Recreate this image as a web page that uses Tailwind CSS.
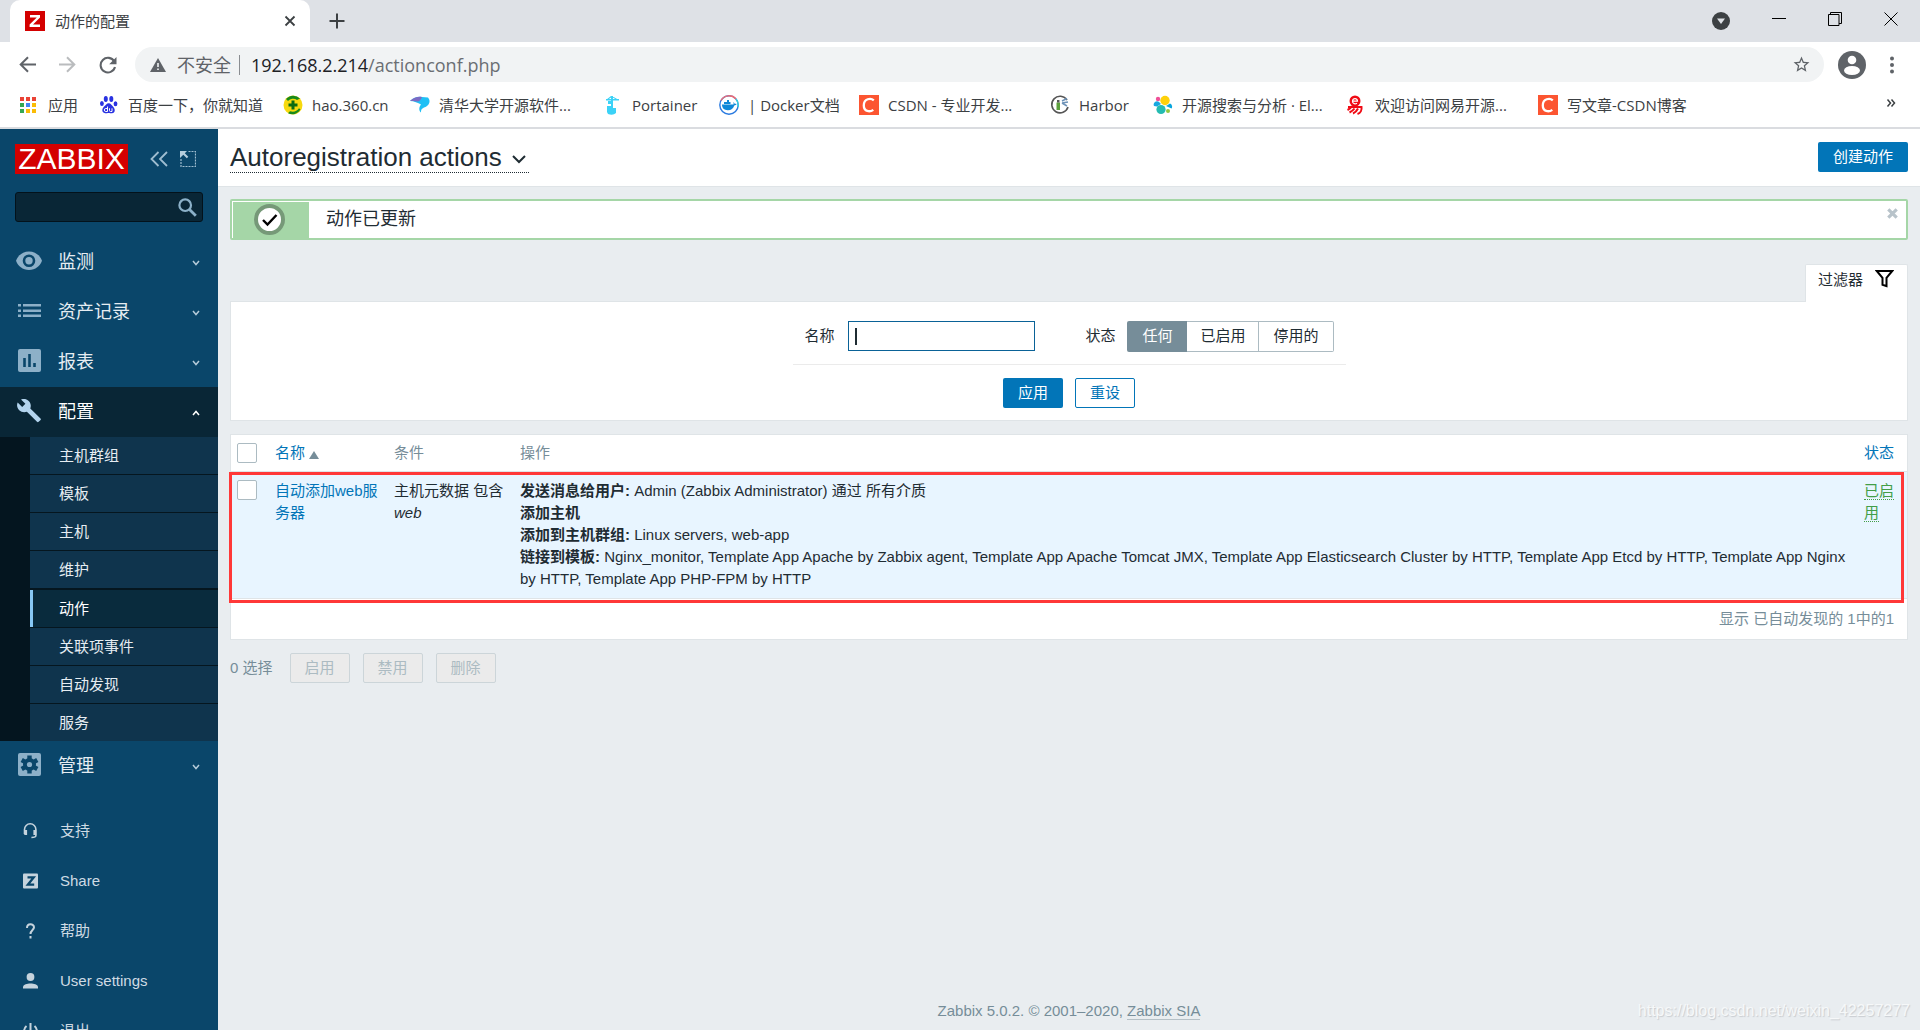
<!DOCTYPE html>
<html lang="zh-CN">
<head>
<meta charset="utf-8">
<title>动作的配置</title>
<script src="https://cdn.jsdelivr.net/npm/@tailwindcss/browser@4"></script>
</head>
<body class="flex h-screen flex-col overflow-hidden bg-[#e9edf0] font-['Liberation_Sans','Noto_Sans_CJK_SC',sans-serif] text-[15px] leading-[22px] text-[#1f2c33]">

<!-- Browser window -->
<header class="shrink-0 border-b-2 border-[#dadce0] bg-white font-['Open_Sans','Noto_Sans_CJK_SC',sans-serif] text-[#3c4043]">
  <div class="flex h-[42px] items-end bg-[#dee1e6] pl-[10px]">
    <div class="flex h-[42px] w-[300px] items-center rounded-t-[10px] bg-white pr-3 pl-[15px]">
      <svg class="size-5 shrink-0" viewBox="0 0 20 20"><rect width="20" height="20" fill="#d40000"/><path d="M5 4h10v2.4L8 13.6h7V16H4.600v-2.400L11.800 6.400H5z" fill="#fff"/></svg>
      <span class="ml-[10px] flex-1 text-[15px]">动作的配置</span>
      <button aria-label="关闭标签页" class="flex size-4 items-center justify-center"><svg class="size-3" viewBox="0 0 12 12" stroke="#3c4043" stroke-width="1.800"><path d="M1.500 1.500l9 9M10.500 1.500l-9 9"/></svg></button>
    </div>
    <button aria-label="新标签页" class="mb-[13px] ml-[19px]"><svg class="size-4" viewBox="0 0 16 16" stroke="#3c4043" stroke-width="2"><path d="M8 .5v15M.5 8h15"/></svg></button>
    <div class="ml-auto flex h-full items-center gap-[42px] pr-[22px]">
      <svg class="size-[18px]" viewBox="0 0 18 18"><circle cx="9" cy="9" r="9" fill="#3c4043"/><path d="M5 6.500h8L9 12z" fill="#dee1e6"/></svg>
      <svg class="-mt-[7px] size-[14px]" viewBox="0 0 14 14" stroke="#000"><path d="M0 7.500h14"/></svg>
      <svg class="-mt-[5px] size-[14px]" viewBox="0 0 14 14" fill="none" stroke="#000"><path d="M.5 2.500h10.500v11H.5zM2.500 2.500v-2h11v11h-2.500"/></svg>
      <svg class="-mt-[5px] size-[14px]" viewBox="0 0 14 14" stroke="#000"><path d="M.5.5l13 13M13.500.5l-13 13"/></svg>
    </div>
  </div>
  <div class="flex h-[45px] items-center pr-6 pl-[19px]">
    <button aria-label="后退"><svg class="size-[17px]" viewBox="0 0 17 17" fill="none" stroke="#5f6368" stroke-width="2"><path d="M17 8.500H2M9 1.200L1.700 8.500 9 15.800"/></svg></button>
    <button aria-label="前进" class="ml-[23px]"><svg class="size-[17px]" viewBox="0 0 17 17" fill="none" stroke="#babcbe" stroke-width="2"><path d="M0 8.500h15M8 1.200l7.300 7.300L8 15.800"/></svg></button>
    <button aria-label="重新加载" class="ml-[23px]"><svg class="size-[18px]" viewBox="0 0 18 18"><path d="M15.300 5.500A7.300 7.300 0 1 0 16 11" fill="none" stroke="#5f6368" stroke-width="2.100"/><path d="M17.500 1v7.300h-7.300z" fill="#5f6368"/></svg></button>
    <div class="ml-[18px] flex h-[35px] flex-1 items-center rounded-full bg-[#f1f3f4] pr-[13px] pl-[15px]">
      <svg class="size-4 shrink-0" viewBox="0 0 16 16"><path d="M8 1l8 14H0z" fill="#5f6368"/><path d="M8 6v4M8 11.500v1.500" stroke="#f1f3f4" stroke-width="1.600"/></svg>
      <span class="ml-[11px] text-[18px]/[24px] text-[#5f6368]">不安全</span>
      <span class="mx-2 h-5 w-px bg-[#8a8d91]"></span>
      <div class="ml-[3px] flex-1 text-[18px]/[24px] text-[#6a6e73]"><span class="text-[#202124]">192.168.2.214</span>/actionconf.php</div>
      <svg class="size-[19px]" viewBox="0 0 24 24" fill="#5f6368"><path d="M22 9.240l-7.190-.62L12 2 9.190 8.630 2 9.240l5.460 4.730L5.820 21 12 17.270 18.180 21l-1.630-7.030L22 9.240zM12 15.400l-3.760 2.270 1-4.280-3.320-2.880 4.380-.38L12 6.100l1.710 4.040 4.380.38-3.320 2.880 1 4.280L12 15.400z"/></svg>
    </div>
    <svg class="ml-[14px] size-7" viewBox="0 0 28 28"><circle cx="14" cy="14" r="14" fill="#5f6368"/><circle cx="14" cy="9" r="4.300" fill="#fff"/><ellipse cx="14" cy="19.500" rx="8" ry="4.500" fill="#fff"/></svg>
    <svg class="ml-[22px] h-[18px] w-2" viewBox="0 0 8 18" fill="#5f6368"><circle cx="4" cy="2.500" r="2"/><circle cx="4" cy="9" r="2"/><circle cx="4" cy="15.500" r="2"/></svg>
  </div>
  <nav class="flex h-[40px] items-center gap-5 pb-1 pl-[19px] whitespace-nowrap">
    <a href="#" class="flex items-center gap-[9px]"><svg class="size-5" viewBox="0 0 20 20"><path d="M1 2h4v4H1zM7 2h4v4H7zM13 2h4v4h-4z" fill="#ea4335"/><path d="M1 8h4v4H1zM1 14h4v4H1z" fill="#34a853"/><path d="M7 8h4v4H7z" fill="#4285f4"/><path d="M13 8h4v4h-4zM7 14h4v4H7zM13 14h4v4h-4z" fill="#fbbc05"/></svg><span class="w-[31px]">应用</span></a>
    <a href="#" class="flex items-center gap-[9px]"><svg class="size-5" viewBox="0 0 20 20" fill="#2932e1"><ellipse cx="6.800" cy="4" rx="2" ry="2.900"/><ellipse cx="12.300" cy="4" rx="2" ry="2.900"/><ellipse cx="2.900" cy="8.500" rx="1.900" ry="2.500"/><ellipse cx="16.500" cy="8.800" rx="1.900" ry="2.500"/><path d="M9.700 8.200c2 0 3 2 4.500 3.500 2.300 2.200 2.200 6.300-1.200 6.500-1.500.1-2-.3-3.400-.3s-2 .4-3.500.3c-3.500-.2-3.500-4.500-1-6.600C6.800 10.200 7.500 8.200 9.700 8.200z"/><path d="M8.500 11.500v5h-1.700a1.300 1.300 0 0 1 0-3h1.700M10.500 13.300v2.200q0 1 1 1h1.500v-3.200" fill="none" stroke="#fff"/></svg><span class="w-[135px]">百度一下，你就知道</span></a>
    <a href="#" class="flex items-center gap-[9px]"><svg class="size-5" viewBox="0 0 20 20"><circle cx="10" cy="10" r="9.500" fill="#f7d90e"/><path d="M3 4a9.500 9.500 0 0 1 14 -.5l-3 1.500a7 7 0 0 0-9 1zM17.500 14.500A9.500 9.500 0 0 1 5 18.300l2-2a8 8 0 0 0 9-3z" fill="#178a1c"/><path d="M8.500 5.500h3v3h3v3h-3v3h-3v-3h-3v-3h3z" fill="#0b6b12"/></svg><span class="w-[78px]">hao.360.cn</span></a>
    <a href="#" class="flex items-center gap-[9px]"><svg class="size-5" viewBox="0 0 20 20"><path d="M0 6C4 2 8 1.500 12 2l6 .5c2 2 2 5 .5 7-2 2.500-4 2.500-6 4-1.500 1-1.500 2.500-1.500 4-2.500-2-2-5.500 0-8C8 8 4 6 0 6z" fill="#1fc0f5"/><path d="M0 6c4-4 8-4.500 12-4-1 3-3 5-5 4.500-3-.5-5-.5-7-.5z" fill="#7c6bc4"/></svg><span class="w-[144px]">清华大学开源软件...</span></a>
    <a href="#" class="flex items-center gap-[9px]"><svg class="size-5" viewBox="0 0 20 20" fill="#3bd2f7"><path d="M8 1h2v11H8zM3 4h13v1.400H3zM8 1h1l6 3.500h-2L9 2 5 4.500H3.500zM5 6h3v3H5z"/><path d="M4 11h6v2h3v5q-3 3-8 1l-1-2z"/></svg><span class="w-[67px]">Portainer</span></a>
    <a href="#" class="flex items-center gap-[9px]"><svg class="size-5" viewBox="0 0 20 20"><circle cx="10" cy="10" r="9.200" fill="#fff" stroke="#2b7be0" stroke-width="1.400"/><path d="M2 5.500A9.200 9.200 0 0 1 17 4" fill="none" stroke="#ef6b73" stroke-width="1.400"/><path d="M17 4a9.200 9.200 0 0 1 2 8" fill="none" stroke="#35d0dd" stroke-width="1.400"/><path d="M3 9.500h11.500c.3-1 0-1.700-.3-2.300 1 .3 1.300 1 1.400 1.600.8-.2 1.500 0 2 .3-.5 1-1.400 1.300-2.300 1.300-1 3-3 4.800-6.500 4.800C5 15.200 3 13 3 9.500zM5 7h6.500v2H5zM8 5h2v2H8z" fill="#1088d8"/></svg><span class="w-[91px]">| Docker文档</span></a>
    <a href="#" class="flex items-center gap-[9px]"><svg class="size-5" viewBox="0 0 20 20"><rect width="20" height="20" fill="#fc5531"/><path d="M14.800 5.300C12 2.900 4.800 3.200 4.800 10.500c0 6.300 6.200 6.800 9.500 4.300" fill="none" stroke="#fff" stroke-width="2.300"/></svg><span class="w-[142px]">CSDN - 专业开发...</span></a>
    <a href="#" class="flex items-center gap-[9px]"><svg class="size-5" viewBox="0 0 20 20"><path d="M17 5A8.300 8.300 0 1 0 18 12" fill="none" stroke="#555" stroke-width="1.600"/><path d="M6.500 7.500h3.500V15H6.500z" fill="#5ca03c"/><path d="M7 5h2.500v2.500H7z" fill="#555"/><path d="M12 6l5-2.500M12 8l6-1M12 8l5 3" stroke="#6e93b8" stroke-width="1.500"/></svg><span class="w-[54px]">Harbor</span></a>
    <a href="#" class="flex items-center gap-[9px]"><svg class="size-5" viewBox="0 0 20 20"><circle cx="12" cy="5.500" r="4.700" fill="#fed10a"/><circle cx="8" cy="14.500" r="4.600" fill="#24bbb1"/><circle cx="5" cy="4" r="2.200" fill="#ef5098"/><path d="M1 11a3.300 3.300 0 0 1 5-4l2 2-4 2.500z" fill="#17a8e0"/><path d="M13 11l4-2.500a3.300 3.300 0 0 1 1.500 5z" fill="#07a5de"/><circle cx="15" cy="16" r="2" fill="#93c83e"/></svg><span class="w-[144px]">开源搜索与分析 · El...</span></a>
    <a href="#" class="flex items-center gap-[9px]"><svg class="size-5" viewBox="0 0 20 20"><circle cx="9" cy="6" r="5.500" fill="#f00a14"/><path d="M6.500 6.200h5c0-3.500-5-3.500-5 0 0 3 3 3 4.500 2" fill="none" stroke="#fff" stroke-width="1.200"/><path d="M2 12h13.500c.5 3-1 6-4 7M6 11c-1 2-2.500 3-4.500 4M8.500 13.500c-1.500 2-3 3-5 4M12 13.500c-1 2-2.500 4-5 5" fill="none" stroke="#f00a14" stroke-width="2"/></svg><span class="w-[143px]">欢迎访问网易开源...</span></a>
    <a href="#" class="flex items-center gap-[9px]"><svg class="size-5" viewBox="0 0 20 20"><rect width="20" height="20" fill="#fc5531"/><path d="M14.800 5.300C12 2.900 4.800 3.200 4.800 10.500c0 6.300 6.200 6.800 9.500 4.300" fill="none" stroke="#fff" stroke-width="2.300"/></svg><span>写文章-CSDN博客</span></a>
    <button aria-label="更多书签" class="mr-[24px] mb-1 ml-auto"><svg class="size-[10px]" viewBox="0 0 10 10" fill="none" stroke="#3c4043" stroke-width="1.500"><path d="M1.500 1.500L4.500 5l-3 3.500M5.500 1.500L8.500 5l-3 3.500"/></svg></button>
  </nav>
</header>

<div class="flex min-h-0 flex-1">
  <!-- Sidebar -->
  <aside class="w-[218px] shrink-0 overflow-hidden bg-[#0a466a] text-[#e6edf2]">
    <div class="flex items-center px-[15px] pt-[15px]">
      <a href="#" aria-label="ZABBIX" class="flex h-[30px] w-[113px] items-center justify-center bg-[#d40000] text-[30px] leading-[30px] text-white">ZABBIX</a>
      <button aria-label="收起侧栏" class="ml-[22px]"><svg class="h-4 w-[18px]" viewBox="0 0 18 16" fill="none" stroke="#9fbdd0" stroke-width="1.800"><path d="M8.500 1l-7 7 7 7M17 1l-7 7 7 7"/></svg></button>
      <button aria-label="隐藏侧栏" class="ml-3"><svg class="size-4" viewBox="0 0 16 16" fill="none" stroke="#9fbdd0"><path d="M1 8v7.500h14.500V.5H8" stroke-dasharray="2 1" stroke-width="1.200"/><path d="M0 0h7L4.800 2.200l3.500 3.500-1.500 1.500-3.500-3.500L0 7z" fill="#b5cede" stroke="none"/></svg></button>
    </div>
    <div class="mx-[15px] mt-[18px] flex h-[30px] items-center rounded-[3px] border border-[#03121b] bg-[#092636] pr-[5px]">
      <input type="text" aria-label="搜索" class="h-full min-w-0 flex-1 bg-transparent px-2 outline-none">
      <svg class="size-[19px]" viewBox="0 0 19 19" fill="none" stroke="#8bb0c8"><circle cx="7.200" cy="7.200" r="5.800" stroke-width="2.200"/><path d="M11.500 11.500l6.300 6.300" stroke-width="2.800"/></svg>
    </div>
    <nav class="mt-[15px] text-[18px]">
      <a href="#" class="flex h-[50px] items-center pr-[18px] pl-[15px]"><svg class="mb-[2px] h-5 w-7" viewBox="0 0 28 20"><path d="M14 .5C7.500.5 3 4.500 1 9.700c2 5.200 6.500 9.300 13 9.300s11-4.100 13-9.300C25 4.500 20.500.5 14 .5z" fill="#8db0c8"/><circle cx="14" cy="9.700" r="5" fill="#8db0c8" stroke="#0a466a" stroke-width="2.600"/></svg><span class="ml-[15px] flex-1">监测</span><svg class="mt-[2px] size-2" viewBox="0 0 8 8" fill="none" stroke="#b5cbd9" stroke-width="1.500"><path d="M1 2l3 3.500L7 2"/></svg></a>
      <a href="#" class="flex h-[50px] items-center pr-[18px] pl-[15px]"><svg class="mb-[2px] h-5 w-7" viewBox="0 0 28 20"><path d="M3 3h3v2.500H3zM8 3h18v2.500H8zM3 8.500h3V11H3zM8 8.500h18V11H8zM3 13.500h3V16H3zM8 13.500h18V16H8z" fill="#8db0c8"/></svg><span class="ml-[15px] flex-1">资产记录</span><svg class="mt-[2px] size-2" viewBox="0 0 8 8" fill="none" stroke="#b5cbd9" stroke-width="1.500"><path d="M1 2l3 3.500L7 2"/></svg></a>
      <a href="#" class="flex h-[50px] items-center pr-[18px] pl-[15px]"><svg class="mb-[2px] h-6 w-7" viewBox="0 0 28 24"><rect x="3" width="23" height="23" rx="2" fill="#8db0c8"/><path d="M9.500 9v9M14.500 5v13M19.500 14v4" stroke="#0a466a" stroke-width="2.600"/></svg><span class="ml-[15px] flex-1">报表</span><svg class="mt-[2px] size-2" viewBox="0 0 8 8" fill="none" stroke="#b5cbd9" stroke-width="1.500"><path d="M1 2l3 3.500L7 2"/></svg></a>
      <a href="#" class="flex h-[50px] items-center bg-[#092636] pr-[18px] pl-[15px] text-white"><svg class="mb-[2px] h-6 w-7" viewBox="0 0 28 24"><path d="M25.500 19.400l-10.200-10c1-2.500.5-5.500-1.600-7.500C11.500-.3 8.500-.6 6 .5l4.400 4.300-3.200 3.100L2.700 3.500C1.500 6 2 9 4.200 11.200c2.100 2 5.100 2.500 7.700 1.500L22 22.800c.5.500 1.200.5 1.600 0l2-1.900c.5-.4.4-1.100-.1-1.500z" fill="#b3d4ee"/></svg><span class="ml-[15px] flex-1">配置</span><svg class="mt-[2px] size-2" viewBox="0 0 8 8" fill="none" stroke="#fff" stroke-width="1.500"><path d="M1 6l3-3.500L7 6"/></svg></a>
      <ul class="bg-[#04151f] pl-[30px] text-[15px]">
        <li><a href="#" class="flex h-[38px] items-center border-b border-[#05161f] bg-[#0f344d] pl-[29px]">主机群组</a></li>
        <li><a href="#" class="flex h-[38px] items-center border-b border-[#05161f] bg-[#0f344d] pl-[29px]">模板</a></li>
        <li><a href="#" class="flex h-[38px] items-center border-b border-[#05161f] bg-[#0f344d] pl-[29px]">主机</a></li>
        <li><a href="#" class="flex h-[38px] items-center border-b border-[#05161f] bg-[#0f344d] pl-[29px]">维护</a></li>
        <li><a href="#" class="flex h-[39px] items-center border-t border-b border-[#05161f] bg-[#092b3d] text-white"><span class="h-full w-[3px] bg-[#87c8f5]"></span><span class="ml-[26px]">动作</span></a></li>
        <li><a href="#" class="flex h-[38px] items-center border-b border-[#05161f] bg-[#0f344d] pl-[29px]">关联项事件</a></li>
        <li><a href="#" class="flex h-[38px] items-center border-b border-[#05161f] bg-[#0f344d] pl-[29px]">自动发现</a></li>
        <li><a href="#" class="flex h-[37px] items-center bg-[#0f344d] pl-[29px]">服务</a></li>
      </ul>
      <a href="#" class="flex h-[50px] items-center pr-[18px] pl-[15px]"><svg class="mb-[2px] h-6 w-7" viewBox="0 0 28 24"><rect x="3" width="23" height="23" rx="2" fill="#8db0c8"/><g transform="translate(14.500 11.500)"><circle r="6.500" fill="#0a466a"/><path d="M0-9V9M-7.800-4.500l15.600 9M-7.800 4.500l15.600-9" stroke="#0a466a" stroke-width="4.400"/><circle r="2.600" fill="#8db0c8"/></g></svg><span class="ml-[15px] flex-1">管理</span><svg class="mt-[2px] size-2" viewBox="0 0 8 8" fill="none" stroke="#b5cbd9" stroke-width="1.500"><path d="M1 2l3 3.500L7 2"/></svg></a>
    </nav>
    <nav class="mt-[15px] text-[15px] text-[#cfdbe4]">
      <a href="#" class="flex h-[50px] items-center pl-[22px]"><svg class="size-4" viewBox="0 0 16 16" fill="none" stroke="#c5d3dd" stroke-width="1.600"><path d="M2.500 11V6.500a5.700 5.700 0 0 1 11.400 0v6q0 2-4.500 2"/><path d="M3.700 7v5M12.800 7v5" stroke-width="2.800"/></svg><span class="ml-[22px]">支持</span></a>
      <a href="#" class="flex h-[50px] items-center pl-[22px]"><svg class="size-4" viewBox="0 0 16 16"><rect x="1" y=".5" width="15" height="15" rx="1" fill="#c5d3dd"/><path d="M5.500 4.300h6.300L5.800 11.700h6.400" fill="none" stroke="#0a466a" stroke-width="2.200"/></svg><span class="ml-[22px]">Share</span></a>
      <a href="#" class="flex h-[50px] items-center pl-[22px]"><svg class="size-4" viewBox="0 0 16 16" fill="none" stroke="#c5d3dd" stroke-width="2"><path d="M5 5c0-5 7-4.500 7-.7C12 7 8.500 7 8.500 11M8.500 13v2.500"/></svg><span class="ml-[22px]">帮助</span></a>
      <a href="#" class="flex h-[50px] items-center pl-[22px]"><svg class="size-4" viewBox="0 0 16 16" fill="#c5d3dd"><circle cx="8.500" cy="4" r="3.900"/><path d="M1 15.500v-1.700C2 9.500 15 9.500 16 13.800v1.700z"/></svg><span class="ml-[22px]">User settings</span></a>
      <a href="#" class="flex h-[50px] items-center pl-[22px]"><svg class="size-4" viewBox="0 0 16 16" fill="none" stroke="#c5d3dd" stroke-width="2"><path d="M8.500 0v8M4.500 3a6.400 6.400 0 1 0 8 0"/></svg><span class="ml-[22px]">退出</span></a>
    </nav>
  </aside>

  <!-- Content -->
  <main class="relative flex min-w-0 flex-1 flex-col">
    <header class="flex h-[58px] items-start justify-between border-b border-[#dfe4e7] bg-white px-3">
      <h1 class="mt-[13px]"><button class="flex h-[31px] items-center border-b border-dotted border-[#1f2c33] pr-[3px] text-[26px] leading-[30px]">Autoregistration actions<svg class="mt-1 ml-[10px] size-[14px]" viewBox="0 0 14 14" fill="none" stroke="#1f2c33" stroke-width="2"><path d="M1 4l6 6 6-6"/></svg></button></h1>
      <button class="mt-[13px] h-[30px] rounded-[2px] bg-[#0275b8] px-[15px] text-white">创建动作</button>
    </header>

    <div class="flex flex-1 flex-col px-3">
      <div class="mt-3 flex h-[41px] rounded-[2px] border-2 border-[#a5d6a7] bg-white">
        <div class="mt-px ml-px flex w-[76px] items-center justify-center bg-[#a5d6a7]"><svg class="mr-1 mb-[2px] size-[31px]" viewBox="0 0 31 31"><circle cx="15.500" cy="15.500" r="13.500" fill="#fff" stroke="#769978" stroke-width="4"/><path d="M9 16l4.500 4.500L22.500 11" fill="none" stroke="#000" stroke-width="2.400"/></svg></div>
        <p class="ml-[17px] flex-1 self-center pb-[1px] text-[18px]">动作已更新</p>
        <button aria-label="关闭" class="mt-[7px] mr-2 self-start"><svg class="size-[11px]" viewBox="0 0 11 11" stroke="#b8c3ca" stroke-width="3.200"><path d="M1.300 1.300l8.400 8.400M9.700 1.300L1.300 9.700"/></svg></button>
      </div>

      <div class="mt-6 flex justify-end">
        <a href="#" class="z-10 -mb-px flex h-[38px] w-[103px] rounded-t-[2px] border border-b-0 border-[#dfe4e7] bg-white pl-3"><span class="mt-1">过滤器</span><svg class="mt-[4px] ml-[12px] size-[19px]" viewBox="0 0 19 19" fill="none" stroke="#000" stroke-width="2"><path d="M1.800 2h15.400L11.500 8.800v8.400l-4-1.400v-7z"/></svg></a>
      </div>
      <form class="flex h-[120px] flex-col items-center border border-[#dfe4e7] bg-white">
        <div class="flex h-[63px] w-[553px] items-start border-b border-[#ebebeb] px-3 pt-[19px]">
          <label for="name" class="mt-1">名称</label>
          <div class="relative ml-[13px]">
            <input id="name" type="text" class="block h-[30px] w-[187px] border border-[#0a6297] bg-white px-[6px] caret-transparent outline-none">
            <span class="absolute top-[7px] left-[7px] h-[17px] w-[2px] bg-[#1f2c33]"></span>
          </div>
          <fieldset class="ml-auto flex items-start">
            <legend class="float-left mt-1 mr-3">状态</legend>
            <div class="flex h-[31px] text-[15px]">
              <label class="flex items-center rounded-l-[2px] bg-[#768d99] px-[15px] pb-px text-white"><input type="radio" name="status" class="sr-only" checked>任何</label>
              <label class="flex items-center border-y border-r border-[#acbbc2] px-[13px] pb-px"><input type="radio" name="status" class="sr-only">已启用</label>
              <label class="flex items-center rounded-r-[2px] border-y border-r border-[#acbbc2] px-[14px] pb-px"><input type="radio" name="status" class="sr-only">停用的</label>
            </div>
          </fieldset>
        </div>
        <div class="mt-[13px] flex gap-3">
          <button type="button" class="h-[30px] w-[60px] rounded-[2px] bg-[#0275b8] text-white">应用</button>
          <button type="button" class="h-[30px] w-[60px] rounded-[2px] border border-[#0275b8] text-[#0275b8]">重设</button>
        </div>
      </form>

      <div class="relative mt-[13px] border border-[#dfe4e7] bg-white">
        <table class="w-full table-fixed text-left align-top">
          <thead>
            <tr class="h-[36px] border-b border-[#dfe4e7] text-[#768d99]">
              <th class="w-[38px] px-[6px]"><input type="checkbox" aria-label="全选" class="block size-5 appearance-none rounded-[2px] border border-[#acbbc2] bg-white"></th>
              <th class="w-[119px] px-[6px] font-normal"><a href="#" class="flex items-center text-[#0275b8]">名称<svg class="mt-1 ml-1 h-2 w-[10px]" viewBox="0 0 10 8"><path d="M5 0l5 8H0z" fill="#768d99"/></svg></a></th>
              <th class="w-[126px] px-[6px] font-normal">条件</th>
              <th class="px-[6px] font-normal">操作</th>
              <th class="w-[49px] px-[6px] font-normal"><a href="#" class="text-[#0275b8]">状态</a></th>
            </tr>
          </thead>
          <tbody>
            <tr class="border-b border-[#dfe4e7] bg-[#e8f5ff] align-top">
              <td class="px-[6px] py-2"><input type="checkbox" aria-label="选择动作" class="block size-5 appearance-none rounded-[2px] border border-[#acbbc2] bg-white"></td>
              <td class="px-[6px] py-2"><a href="#" class="text-[#0275b8]">自动添加web服务器</a></td>
              <td class="px-[6px] py-2">主机元数据 包含 <em>web</em></td>
              <td class="px-[6px] py-2"><b>发送消息给用户:</b> Admin (Zabbix Administrator) 通过 所有介质<br><b>添加主机</b><br><b>添加到主机群组:</b> Linux servers, web-app<br><b>链接到模板:</b> Nginx_monitor, Template App Apache by Zabbix agent, Template App Apache Tomcat JMX, Template App Elasticsearch Cluster by HTTP, Template App Etcd by HTTP, Template App Nginx by HTTP, Template App PHP-FPM by HTTP</td>
              <td class="px-[6px] py-2"><a href="#" class="border-b border-dotted border-[#429e47] text-[#429e47]">已启用</a></td>
            </tr>
          </tbody>
        </table>
        <p class="h-[40px] pt-[9px] pr-[13px] text-right text-[#768d99]">显示 已自动发现的 1中的1</p>
        <div class="pointer-events-none absolute top-[37px] right-[3px] -left-[2px] h-[131px] border-3 border-[#ff3838]"></div>
      </div>

      <div class="mt-[13px] flex items-center text-[#768d99]">
        <span class="mr-[17px]">0 选择</span>
        <div class="flex gap-[13px]">
          <button disabled class="h-[30px] w-[60px] rounded-[2px] border border-[#ccd5d9] bg-[#ebebeb] text-[#acbbc2]">启用</button>
          <button disabled class="h-[30px] w-[60px] rounded-[2px] border border-[#ccd5d9] bg-[#ebebeb] text-[#acbbc2]">禁用</button>
          <button disabled class="h-[30px] w-[60px] rounded-[2px] border border-[#ccd5d9] bg-[#ebebeb] text-[#acbbc2]">删除</button>
        </div>
      </div>

      <footer class="mt-auto mb-2 text-center text-[#768d99]">Zabbix 5.0.2. © 2001–2020, <a href="#" class="border-b border-[#b5c0c6]">Zabbix SIA</a></footer>
    </div>
    <div class="pointer-events-none absolute right-[10px] bottom-2 text-[16px] text-[#f6f8f9] text-shadow-[1px_1px_1px_#c8ccd0]">https://blog.csdn.net/weixin_42257277</div>
  </main>
</div>
</body>
</html>
